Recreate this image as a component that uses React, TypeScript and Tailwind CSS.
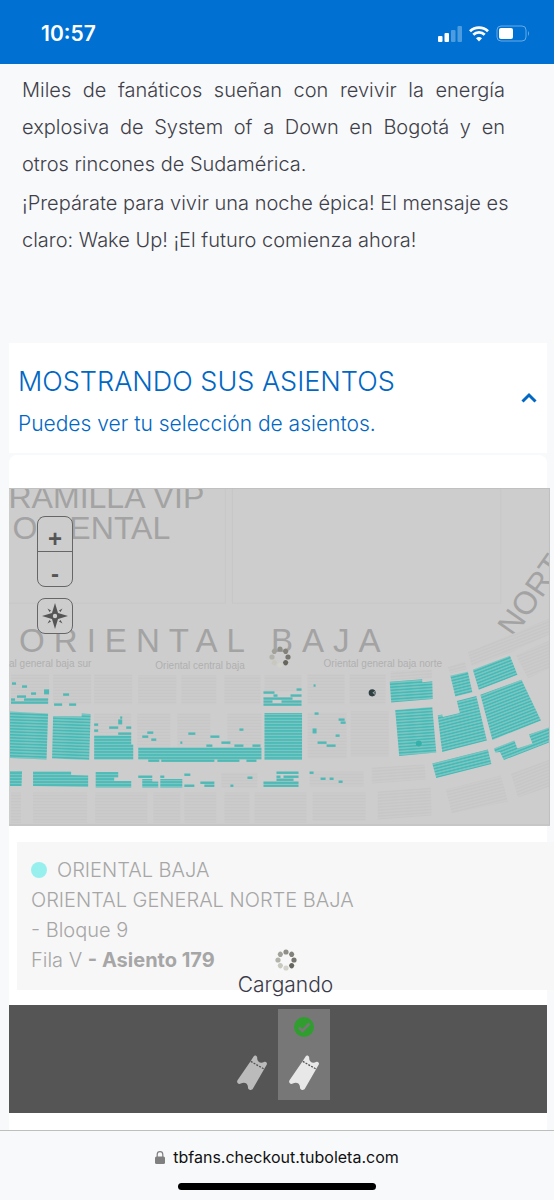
import React, { useState } from "react"

type Row = [x: number, y: number, width: number, height?: number]

type Block = {
  points: string
  fill: string
}

// Loose seats that are still free, one entry per run of seats
const freeRows: Row[] = [
  [13, 682, 4], [23, 685, 5], [32, 692, 5], [45, 689, 5, 5], [64, 693, 6],
  [18, 695, 9], [12, 698, 4], [25, 698, 24], [12, 701, 37], [55, 703, 8], [70, 703, 7],
  [121, 716, 2], [119, 719, 4, 5], [110, 726, 9], [127, 726, 5], [95, 723, 4], [95, 729, 4], [119, 732, 13],
  [148, 731, 6], [143, 735, 6], [152, 738, 5], [181, 741, 2], [189, 732, 7], [240, 728, 4],
  [211, 735, 9], [222, 741, 9], [207, 744, 6], [235, 744, 9], [253, 744, 8],
  [149, 759, 11], [162, 759, 53], [218, 759, 22], [247, 759, 10],
  [139, 775, 14], [161, 775, 4], [185, 773, 6], [185, 784, 10], [201, 781, 14], [205, 784, 10],
  [231, 784, 3], [248, 776, 5],
  [264, 691, 11], [297, 688, 5], [274, 694, 4], [291, 694, 11], [264, 697, 29], [264, 700, 9],
  [282, 700, 20], [264, 703, 38],
  [277, 771, 22], [277, 775, 4], [284, 775, 15], [277, 778, 17], [264, 781, 35], [264, 784, 35],
  [314, 684, 2], [315, 712, 4], [339, 718, 6], [341, 721, 5], [313, 728, 4, 5], [336, 734, 4],
  [318, 741, 9], [327, 744, 9], [310, 771, 4], [321, 777, 5], [330, 777, 4], [339, 780, 4],
]

const freeBlocks: Block[] = [
  { points: "11,711 49,713 47.5,759 11,757.5", fill: "url(#free-2)" },
  { points: "54,715.5 82.5,716 82.5,713 91.5,713.5 90,759.5 53,758", fill: "url(#free-2)" },
  { points: "95,735 132,735 132,744 134,744 134,759 95,759", fill: "url(#free)" },
  { points: "139,747 262,747 262,759 139,759", fill: "url(#free)" },
  { points: "265,712.5 302.5,712.5 302.5,759.5 265,759.5", fill: "url(#free)" },
  { points: "11,770.5 23,770.5 22.5,785.5 11,785.5", fill: "url(#free)" },
  { points: "34,771 72,771 72,774.5 89,775 89,786.5 34,785.5", fill: "url(#free)" },
  { points: "96.5,771.5 119,771.5 119,777 115,777 115,780.5 132,780.5 132,787 96.5,787", fill: "url(#free)" },
  { points: "143,778.5 153,778.5 153,781 159,781 159,787 143,787", fill: "url(#free)" },
  { points: "161,778.5 183,778.5 183,787 161,787", fill: "url(#free)" },
  { points: "390,681.5 422.5,679 422.5,682 432.5,681 433,698.5 391.5,702", fill: "url(#free-n4)" },
  { points: "395.5,709.5 432.5,706.5 436.5,752 399.5,755.5", fill: "url(#free-n4)" },
  { points: "450.5,675.5 468,671.5 472.5,692 455.5,696", fill: "url(#free-n14)" },
  { points: "438,715 442.5,714 443,716.5 460,712.5 457,700.5 476.5,695.5 487,740 442.5,751.5 441,741", fill: "url(#free-n14)" },
  { points: "432.5,763 488,749 491.5,763.5 436.5,777.5", fill: "url(#free-n14)" },
  { points: "473,669.5 510,655.5 517.5,674.5 479,689.5", fill: "url(#free-n21)" },
  { points: "480.5,694.5 521.5,679.5 541,720 492.5,739.5", fill: "url(#free-n21)" },
  { points: "494,748 514.5,740 517.5,748 532.5,743 529,734 549,727 549,742 504,759.5 500,751.5 495.5,752", fill: "url(#free-n21)" },
]

const takenRows: Row[] = [
  [12, 674, 38, 30], [54, 674, 38, 30], [95, 674, 38, 30], [139, 675, 38, 29], [182, 675, 35, 29],
  [225, 675, 36, 29], [265, 675, 37, 16], [308, 674, 37, 30], [350, 674, 36, 30],
  [95, 713, 37, 22], [138, 713, 33, 34], [178, 713, 33, 34], [228, 713, 34, 34],
  [308, 712, 39, 46], [351, 711, 38, 45], [222, 772, 36, 15], [310, 771, 54, 15],
  [12, 792, 10, 30], [34, 792, 54, 30], [96, 792, 52, 30], [154, 792, 27, 30], [185, 792, 32, 30],
  [225, 792, 25, 30], [255, 792, 52, 30], [313, 792, 53, 28],
]

const takenBlocks: Block[] = [
  { points: "391,671 432,669 432,678 391,680", fill: "url(#taken-n4)" },
  { points: "372,767 425,764 426,779 372,783", fill: "url(#taken-n4)" },
  { points: "378,791 431,787 432,815 378,819", fill: "url(#taken-n4)" },
  { points: "446,789 501,775 508,801 452,813", fill: "url(#taken-n14)" },
  { points: "448,667 465,661 467,669 450,673", fill: "url(#taken-n14)" },
  { points: "511,773 550,759 550,786 518,797", fill: "url(#taken-n21)" },
  { points: "468,652 550,618 550,634 511,652 472,666", fill: "url(#taken-n21)" },
  { points: "516,655 550,640 550,668 528,678", fill: "url(#taken-n21)" },
]

const SeatPattern = ({ id, angle, line, seat }: { id: string; angle: number; line: string; seat: string }) => (
  <pattern id={id} width="3" height="3" patternUnits="userSpaceOnUse" patternTransform={`rotate(${angle})`}>
    <rect width="3" height="3" fill={line} />
    <rect y="0.5" width="3" height="2" fill={seat} />
  </pattern>
)

const angles = [
  { suffix: "", angle: 0 },
  { suffix: "-2", angle: 2 },
  { suffix: "-n4", angle: -4 },
  { suffix: "-n14", angle: -14 },
  { suffix: "-n21", angle: -21 },
]

function SeatMap() {
  return (
    <svg viewBox="10 488 540 337" className="block h-auto w-full bg-[#cdcdcd]" fontFamily="Liberation Sans, Arial, sans-serif">
      <defs>
        {angles.map((a) => (
          <React.Fragment key={a.angle}>
            <SeatPattern id={`free${a.suffix}`} angle={a.angle} line="#93cbc9" seat="#48bab6" />
            <SeatPattern id={`taken${a.suffix}`} angle={a.angle} line="#c6c6c6" seat="#cbcbcb" />
          </React.Fragment>
        ))}
      </defs>

      {/* Field outlines */}
      <g fill="none" stroke="#c7c7c7">
        <path d="M10 603H226V488" />
        <path d="M233 488V603H501V488" />
      </g>

      <g fill="#a3a3a3" fontSize="32">
        <text x="205" y="508" textAnchor="end">RAMILLA VIP</text>
        <text x="171" y="539" textAnchor="end">ORIENTAL</text>
        <text transform="translate(514 638) rotate(-55)">NORTE</text>
        <text x="20" y="652" fontSize="33" letterSpacing="9">ORIENTAL BAJA</text>
      </g>
      <g fill="#b0b0b0" fontSize="10">
        <text x="10" y="667">al general baja sur</text>
        <text x="156" y="669">Oriental central baja</text>
        <text x="324" y="667">Oriental general baja norte</text>
      </g>

      {takenRows.map(([x, y, width, height]) => (
        <rect key={`${x}-${y}`} x={x} y={y} width={width} height={height} fill="url(#taken)" />
      ))}
      {takenBlocks.map((b) => (
        <polygon key={b.points} points={b.points} fill={b.fill} />
      ))}
      {freeBlocks.map((b) => (
        <polygon key={b.points} points={b.points} fill={b.fill} />
      ))}
      {freeRows.map(([x, y, width, height = 2.4]) => (
        <rect key={`${x}-${y}`} x={x} y={y} width={width} height={height} fill="#4fb9b5" />
      ))}

      <circle cx="419" cy="743" r="3" fill="#35b0ab" />

      {/* Selected seat */}
      <circle cx="372.500" cy="692.500" r="3.500" fill="#2f3e40" />
      <path d="M375.500 691l-2 1.500 2 1.500" fill="none" stroke="#9aa5a6" />

      <path d="M10 488.500H549.500V824.500H10" fill="none" stroke="#c0c0c0" />
    </svg>
  )
}

const spinnerDots = ["#8f8f88", "#82827b", "#77776f", "#66665e", "#d3d3cb", "#c8c8bf", "#b3b3aa", "#a1a199"]

function Spinner() {
  return (
    <svg viewBox="-11 -11 22 22" className="size-[22px]">
      {spinnerDots.map((color, i) => (
        <circle key={color} cy="-8" r="2.600" fill={color} transform={`rotate(${i * 45})`} />
      ))}
    </svg>
  )
}

function Ticket({ className }: { className: string }) {
  return (
    <svg viewBox="0 0 30 36" className={`h-9 w-[30px] ${className}`} fill="currentColor">
      <path d="M16.600 1.500C17.200.4 18.400.2 19.300.9 20.200 1.500 20.300 2.300 20.200 3.200 20 6.800 23.800 9 27 7 28 6.300 28.900 6.700 29.500 7.400 30.200 8.300 30 9.200 29.500 10L27.200 14 16 33.600C15.200 35 13.700 35.400 12.500 34.700 11.200 34 10.900 33.200 11 32 10.800 28 7 26.800 3.800 28.600 2.700 29.300 1.400 29 .6 28-.1 27 0 26.200.5 25.300L13.400 6.400Z" />
      <path d="M13.800 6.400 27 14" stroke="#555555" strokeWidth="1.300" strokeDasharray="2 1.200" />
    </svg>
  )
}

function StatusBar() {
  return (
    <header className="flex h-16 items-center justify-between bg-[#0071d2] pt-[3px] pr-6 pl-[41px] text-white">
      <span className="text-[21px] leading-7 font-semibold">10:57</span>
      <div className="flex items-center gap-[7px]">
        <svg viewBox="0 0 24 16" className="h-4 w-6" fill="currentColor">
          <rect y="10" width="4.500" height="6" rx="1" />
          <rect x="6.500" y="7" width="4.500" height="9" rx="1" />
          <rect x="13" y="4" width="4.500" height="12" rx="1" opacity=".3" />
          <rect x="19.500" width="4.500" height="16" rx="1" opacity=".3" />
        </svg>
        <svg viewBox="0 0 20 16" className="h-4 w-5" fill="none" stroke="currentColor" strokeWidth="2.700">
          <path d="M1 5.300a12.800 12.800 0 0 1 18 0" />
          <path d="M4.300 8.800a8 8 0 0 1 11.400 0" />
          <path d="M7 12.200Q10 9.700 13 12.200L10 15.400Z" fill="currentColor" stroke="none" />
        </svg>
        <svg viewBox="0 0 34 18" className="h-[18px] w-[34px]">
          <rect x="1" y="1" width="29" height="15" rx="4" fill="none" stroke="#66abe6" />
          <rect x="3" y="3" width="14" height="11" rx="2" fill="#fff" />
          <path d="M32 6q2 2.500 0 5z" fill="#66abe6" />
        </svg>
      </div>
    </header>
  )
}

export default function App() {
  const [open, setOpen] = useState(true)
  const [seat, setSeat] = useState(1)

  return (
    <div className="flex min-h-screen flex-col overflow-x-hidden bg-[#f8f9fb] font-['Inter',sans-serif]">
      <StatusBar />

      <section className="flex flex-col gap-[2px] pt-2 pr-[49px] pl-[22px] text-justify text-[20px] leading-[37px] font-light text-[#3f3f49]">
        <p>
          Miles de fanáticos sueñan con revivir la energía explosiva de System of a Down en Bogotá y en otros rincones
          de Sudamérica.
        </p>
        <p className="-mr-4">
          ¡Prepárate para vivir una noche épica! El mensaje es
          <br />
          claro: Wake Up! ¡El futuro comienza ahora!
        </p>
      </section>

      <main className="mt-[84px] mr-[7px] ml-[9px] flex flex-1 flex-col">
        <button
          onClick={() => setOpen(!open)}
          aria-expanded={open}
          className="flex h-[110px] items-center justify-between bg-white pr-[10px] pl-[9px] text-left font-light text-[#0067c5]"
        >
          <span className="flex flex-col gap-2 pt-2">
            <span className="text-[27px] leading-9">MOSTRANDO SUS ASIENTOS</span>
            <span className="text-[21px] leading-8">Puedes ver tu selección de asientos.</span>
          </span>
          <svg viewBox="0 0 16 12" className="h-3 w-4" fill="none" stroke="currentColor" strokeWidth="3">
            <path d="M1.500 9.500 8 3l6.500 6.500" />
          </svg>
        </button>

        {open && (
          <div className="mt-[2px] flex-1 rounded-t-lg bg-white pt-[33px]">
            <div className="relative -mr-[3px]">
              <SeatMap />
              <div className="absolute top-7 left-7 flex flex-col gap-[11px] text-[#555555]">
                <div className="flex w-9 flex-col divide-y divide-[#666666] rounded-lg border border-[#666666] bg-[#cdcdcd] font-['Liberation_Sans',sans-serif] text-[24px] leading-7 font-bold">
                  <button aria-label="Acercar" className="flex h-[35px] justify-center pt-2">
                    +
                  </button>
                  <button aria-label="Alejar" className="flex h-[34px] justify-center pt-2">
                    -
                  </button>
                </div>
                <button
                  aria-label="Centrar"
                  className="flex size-9 items-center justify-center rounded-lg border border-[#666666] bg-[#cdcdcd]"
                >
                  <svg viewBox="-13 -13 26 26" className="size-[26px]" fill="currentColor">
                    <path
                      fillRule="evenodd"
                      d="M0-13 3-3 13 0 3 3 0 13-3 3-13 0-3-3ZM0-2.200A2.200 2.200 0 1 0 0 2.200 2.200 2.200 0 1 0 0-2.200Z"
                    />
                    <path d="m-7.500-7.500 3.500 2-1.500 1.500zm15 0-3.500 2 1.500 1.500zm-15 15 3.500-2-1.500-1.500zm15 0-3.500-2 1.500-1.500z" />
                  </svg>
                </button>
              </div>
              <div className="pointer-events-none absolute inset-0 flex items-center justify-center">
                <Spinner />
              </div>
            </div>

            <div className="relative mt-4 -mr-[7px] ml-2 h-[148px] bg-[#f7f7f7] pt-[13px] pl-[14px] text-[20px] leading-[30px] font-light text-[#a6a6a6]">
              <p className="flex items-center gap-[10px]">
                <span className="size-4 rounded-full bg-[#97f0ee]" />
                ORIENTAL BAJA
              </p>
              <p>ORIENTAL GENERAL NORTE BAJA</p>
              <p>- Bloque 9</p>
              <p>
                Fila V <strong className="font-bold">- Asiento 179</strong>
              </p>
              <div className="absolute inset-x-0 -bottom-[9px] flex flex-col items-center text-[21px] leading-7 text-[#3a3a4a]">
                <Spinner />
                <span>Cargando</span>
              </div>
            </div>

            <div className="mt-[15px] flex h-[108px] justify-center bg-[#555555] pt-1">
              {[0, 1].map((i) => (
                <button
                  key={i}
                  onClick={() => setSeat(i)}
                  aria-label={`Entrada ${i + 1}`}
                  className={`flex h-[91px] w-[52px] flex-col items-center justify-end pb-[9px] ${seat === i ? "bg-[#777777]" : ""}`}
                >
                  {seat === i && (
                    <svg viewBox="0 0 20 20" className="mb-[18px] size-5">
                      <circle cx="10" cy="10" r="10" fill="#2f9e2f" />
                      <path d="m5 10.500 3.500 3.500L15.500 6.500" fill="none" stroke="#777777" strokeWidth="2.600" />
                    </svg>
                  )}
                  <Ticket className={seat === i ? "text-[#e8e8e8]" : "text-[#bbbbbb]"} />
                </button>
              ))}
            </div>
          </div>
        )}
      </main>

      <footer className="flex h-[70px] flex-col items-center border-t border-[#bcbfbc] bg-[#f8f9fb] pt-[14px]">
        <a href="#" className="flex items-center gap-2 text-[16px] leading-6 text-[#111111]">
          <svg viewBox="0 0 10 13" className="h-[13px] w-[10px]" fill="#808080">
            <rect y="5.500" width="10" height="7.500" rx="1.500" />
            <path d="M2.200 6V3.500a2.800 2.800 0 0 1 5.600 0V6" fill="none" stroke="#808080" strokeWidth="1.200" />
          </svg>
          tbfans.checkout.tuboleta.com
        </a>
        <div className="mt-[14px] h-[7px] w-[198px] rounded-full bg-black" />
      </footer>
    </div>
  )
}
